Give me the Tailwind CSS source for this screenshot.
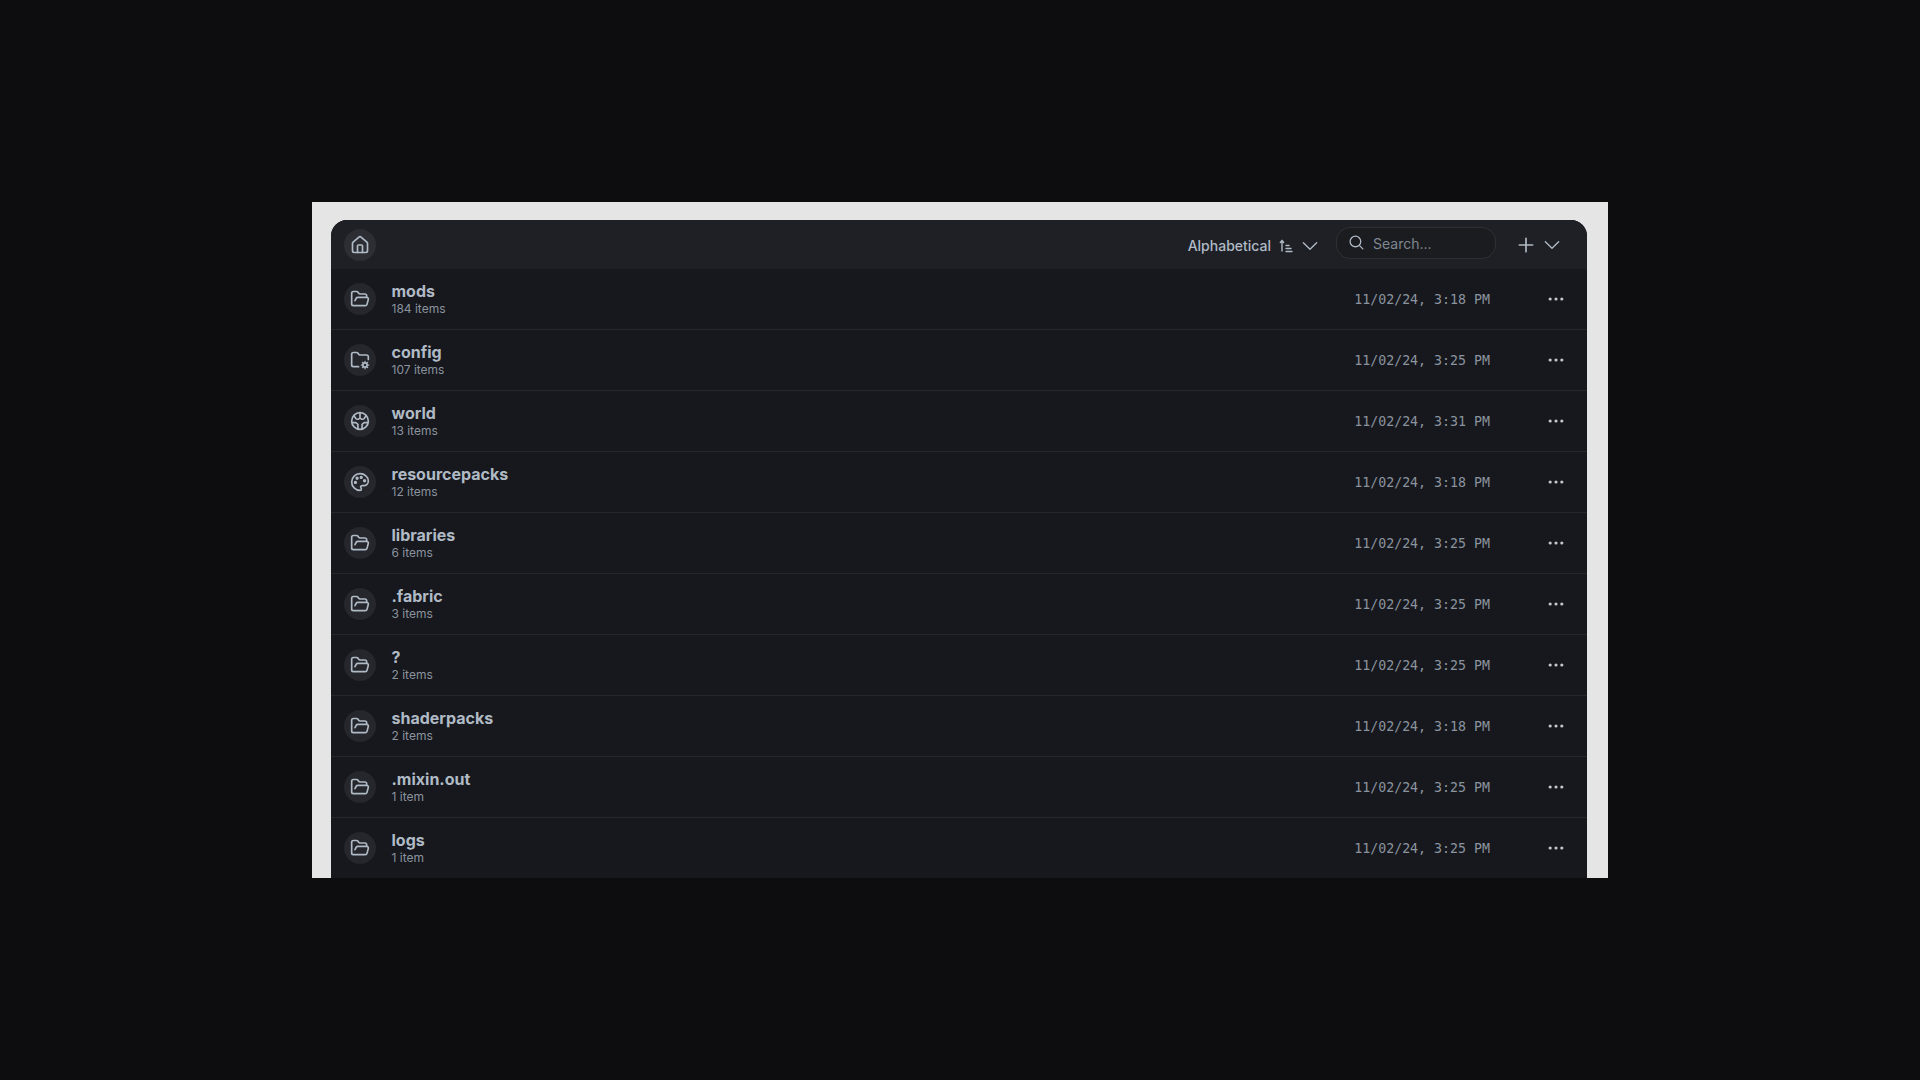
<!doctype html>
<html><head><meta charset="utf-8"><script src="https://cdn.jsdelivr.net/npm/@tailwindcss/browser@4"></script></head>
<body class="bg-[#0d0d0f] font-['Inter','Noto_Sans',sans-serif]">
<svg width="0" height="0" class="absolute"><defs>
<symbol id="open" viewBox="0 0 24 24" fill="none" stroke="currentColor" stroke-width="2" stroke-linecap="round" stroke-linejoin="round"><path d="m6 14 1.5-2.900A2 2 0 0 1 9.240 10H20a2 2 0 0 1 1.940 2.500l-1.540 6a2 2 0 0 1-1.950 1.500H4a2 2 0 0 1-2-2V5a2 2 0 0 1 2-2h3.900a2 2 0 0 1 1.690.9l.81 1.200a2 2 0 0 0 1.670.9H18a2 2 0 0 1 2 2v2"/></symbol>
<symbol id="dots" viewBox="0 0 24 24" fill="currentColor"><circle cx="5" cy="12" r="1.900"/><circle cx="12" cy="12" r="1.900"/><circle cx="19" cy="12" r="1.900"/></symbol>
<symbol id="chev" viewBox="0 0 24 24" fill="none" stroke="currentColor" stroke-width="1.600" stroke-linecap="round" stroke-linejoin="round"><path d="m4 8 8 8 8-8"/></symbol>
</defs></svg>
<div class="h-screen pt-[202px] px-[312px]">
<div class="h-[676px] bg-[#e5e5e5] pt-[18px] pl-[19px] pr-[21px] overflow-hidden">
<div class="h-[800px] rounded-t-[16px] bg-[#16181d] text-[#b0bac5]">

<div class="h-[49px] flex items-center pt-[1px] pl-[13px] pr-[25px] bg-[#1e2025] rounded-t-[16px]">
<span class="w-8 h-8 rounded-full bg-[#2c2e33] grid place-items-center"><svg class="w-5 h-5" viewBox="0 0 24 24" fill="none" stroke="currentColor" stroke-width="2" stroke-linecap="round" stroke-linejoin="round"><path d="M15 21v-8a1 1 0 0 0-1-1h-4a1 1 0 0 0-1 1v8"/><path d="M3 10a2 2 0 0 1 .709-1.528l7-5.999a2 2 0 0 1 2.582 0l7 5.999A2 2 0 0 1 21 10v9a2 2 0 0 1-2 2H5a2 2 0 0 1-2-2z"/></svg></span>
<span class="ml-auto text-[14px] font-medium leading-5 mt-[1px]">Alphabetical</span>
<svg class="w-4 h-4 ml-[7px] mt-[1px]" viewBox="0 0 16 16" fill="none" stroke="currentColor" stroke-width="1.400" stroke-linecap="round" stroke-linejoin="round"><path d="M4 13V2.500M2.300 4.500 4 2.500l1.700 2M8 7.500h3M8 10.500h5M8 13.500h6"/></svg>
<svg class="w-5 h-5 ml-[6px] mt-[1px]"><use href="#chev"/></svg>
<div class="ml-[16px] -mt-[4px] w-[160px] h-8 rounded-[14px] border border-[#2e3035] bg-[#1a1c20] flex items-center pl-[11px] gap-[8px]">
<svg class="w-[17px] h-[17px] shrink-0 -mt-[2px]" viewBox="0 0 24 24" fill="none" stroke="currentColor" stroke-width="1.800" stroke-linecap="round" stroke-linejoin="round"><path d="m21 21-4.300-4.300"/><circle cx="10.500" cy="10.500" r="7.500"/></svg>
<span class="text-[14px] text-[#7f8792]">Search...</span></div>
<svg class="w-5 h-5 ml-[20px]" viewBox="0 0 24 24" fill="none" stroke="currentColor" stroke-width="2" stroke-linecap="round"><path d="M4 12h16M12 4v16"/></svg>
<svg class="w-5 h-5 ml-[6px]"><use href="#chev"/></svg>
</div>

<div class="h-[61px] border-b border-[#25272b] flex items-center pl-[13px] pr-[21px]"><span class="w-8 h-8 rounded-full bg-[#25272c] grid place-items-center"><svg class="w-5 h-5"><use href="#open"/></svg></span><div class="ml-[15.5px] pt-[1px]"><div class="text-[16px] leading-[18px] font-bold">mods</div><div class="text-[12px] leading-[16px] mt-[1px] text-[#8b939e]">184 items</div></div><span class="ml-auto mt-[2px] font-['DejaVu_Sans_Mono',monospace] text-[13.28px] text-[#8b939e]">11/02/24, 3:18 PM</span><svg class="w-5 h-5 ml-[56px] text-[#c4c8ce]"><use href="#dots"/></svg></div>

<div class="h-[61px] border-b border-[#25272b] flex items-center pl-[13px] pr-[21px]"><span class="w-8 h-8 rounded-full bg-[#25272c] grid place-items-center"><svg class="w-5 h-5" viewBox="0 0 24 24" fill="none" stroke="currentColor" stroke-width="2" stroke-linecap="round" stroke-linejoin="round"><path d="M10.300 20H4a2 2 0 0 1-2-2V5a2 2 0 0 1 2-2h3.900a2 2 0 0 1 1.690.9l.81 1.200a2 2 0 0 0 1.670.9H20a2 2 0 0 1 2 2v3.300"/><circle cx="18" cy="18" r="2.500"/><path d="M18 13.500v1.500M18 21v1.500M22.500 18H21M15 18h-1.500M14.800 14.800l1 1M20.200 20.200l1 1M21.200 14.800l-1 1M15.800 20.200l-1 1" stroke-width="1.500"/></svg></span><div class="ml-[15.5px] pt-[1px]"><div class="text-[16px] leading-[18px] font-bold">config</div><div class="text-[12px] leading-[16px] mt-[1px] text-[#8b939e]">107 items</div></div><span class="ml-auto mt-[2px] font-['DejaVu_Sans_Mono',monospace] text-[13.28px] text-[#8b939e]">11/02/24, 3:25 PM</span><svg class="w-5 h-5 ml-[56px] text-[#c4c8ce]"><use href="#dots"/></svg></div>

<div class="h-[61px] border-b border-[#25272b] flex items-center pl-[13px] pr-[21px]"><span class="w-8 h-8 rounded-full bg-[#25272c] grid place-items-center"><svg class="w-5 h-5" viewBox="0 0 24 24" fill="none" stroke="currentColor" stroke-width="2" stroke-linecap="round" stroke-linejoin="round"><circle cx="12" cy="12" r="10"/><path d="M4.500 5.500 7 9c1 1 2.500 1 3.500.5L12 8.500M19.500 5.500 17 9c-1 1-2.500 1-3.500.5L12 8.500V3M2.500 14H7l2.500 2v5.500M21.500 14H17l-2.500 2v5.500"/></svg></span><div class="ml-[15.5px] pt-[1px]"><div class="text-[16px] leading-[18px] font-bold">world</div><div class="text-[12px] leading-[16px] mt-[1px] text-[#8b939e]">13 items</div></div><span class="ml-auto mt-[2px] font-['DejaVu_Sans_Mono',monospace] text-[13.28px] text-[#8b939e]">11/02/24, 3:31 PM</span><svg class="w-5 h-5 ml-[56px] text-[#c4c8ce]"><use href="#dots"/></svg></div>

<div class="h-[61px] border-b border-[#25272b] flex items-center pl-[13px] pr-[21px]"><span class="w-8 h-8 rounded-full bg-[#25272c] grid place-items-center"><svg class="w-5 h-5" viewBox="0 0 24 24" fill="none" stroke="currentColor" stroke-width="2" stroke-linecap="round" stroke-linejoin="round"><circle cx="13.500" cy="6.500" r="1" fill="currentColor"/><circle cx="17.500" cy="10.500" r="1" fill="currentColor"/><circle cx="8.500" cy="7.500" r="1" fill="currentColor"/><circle cx="6.500" cy="12.500" r="1" fill="currentColor"/><path d="M12 2C6.500 2 2 6.500 2 12s4.500 10 10 10c.926 0 1.648-.746 1.648-1.688 0-.437-.18-.835-.437-1.125-.29-.289-.438-.652-.438-1.125a1.640 1.640 0 0 1 1.668-1.668h1.996c3.051 0 5.555-2.503 5.555-5.554C21.965 6.012 17.461 2 12 2z"/></svg></span><div class="ml-[15.5px] pt-[1px]"><div class="text-[16px] leading-[18px] font-bold">resourcepacks</div><div class="text-[12px] leading-[16px] mt-[1px] text-[#8b939e]">12 items</div></div><span class="ml-auto mt-[2px] font-['DejaVu_Sans_Mono',monospace] text-[13.28px] text-[#8b939e]">11/02/24, 3:18 PM</span><svg class="w-5 h-5 ml-[56px] text-[#c4c8ce]"><use href="#dots"/></svg></div>

<div class="h-[61px] border-b border-[#25272b] flex items-center pl-[13px] pr-[21px]"><span class="w-8 h-8 rounded-full bg-[#25272c] grid place-items-center"><svg class="w-5 h-5"><use href="#open"/></svg></span><div class="ml-[15.5px] pt-[1px]"><div class="text-[16px] leading-[18px] font-bold">libraries</div><div class="text-[12px] leading-[16px] mt-[1px] text-[#8b939e]">6 items</div></div><span class="ml-auto mt-[2px] font-['DejaVu_Sans_Mono',monospace] text-[13.28px] text-[#8b939e]">11/02/24, 3:25 PM</span><svg class="w-5 h-5 ml-[56px] text-[#c4c8ce]"><use href="#dots"/></svg></div>

<div class="h-[61px] border-b border-[#25272b] flex items-center pl-[13px] pr-[21px]"><span class="w-8 h-8 rounded-full bg-[#25272c] grid place-items-center"><svg class="w-5 h-5"><use href="#open"/></svg></span><div class="ml-[15.5px] pt-[1px]"><div class="text-[16px] leading-[18px] font-bold">.fabric</div><div class="text-[12px] leading-[16px] mt-[1px] text-[#8b939e]">3 items</div></div><span class="ml-auto mt-[2px] font-['DejaVu_Sans_Mono',monospace] text-[13.28px] text-[#8b939e]">11/02/24, 3:25 PM</span><svg class="w-5 h-5 ml-[56px] text-[#c4c8ce]"><use href="#dots"/></svg></div>

<div class="h-[61px] border-b border-[#25272b] flex items-center pl-[13px] pr-[21px]"><span class="w-8 h-8 rounded-full bg-[#25272c] grid place-items-center"><svg class="w-5 h-5"><use href="#open"/></svg></span><div class="ml-[15.5px] pt-[1px]"><div class="text-[16px] leading-[18px] font-bold">?</div><div class="text-[12px] leading-[16px] mt-[1px] text-[#8b939e]">2 items</div></div><span class="ml-auto mt-[2px] font-['DejaVu_Sans_Mono',monospace] text-[13.28px] text-[#8b939e]">11/02/24, 3:25 PM</span><svg class="w-5 h-5 ml-[56px] text-[#c4c8ce]"><use href="#dots"/></svg></div>

<div class="h-[61px] border-b border-[#25272b] flex items-center pl-[13px] pr-[21px]"><span class="w-8 h-8 rounded-full bg-[#25272c] grid place-items-center"><svg class="w-5 h-5"><use href="#open"/></svg></span><div class="ml-[15.5px] pt-[1px]"><div class="text-[16px] leading-[18px] font-bold">shaderpacks</div><div class="text-[12px] leading-[16px] mt-[1px] text-[#8b939e]">2 items</div></div><span class="ml-auto mt-[2px] font-['DejaVu_Sans_Mono',monospace] text-[13.28px] text-[#8b939e]">11/02/24, 3:18 PM</span><svg class="w-5 h-5 ml-[56px] text-[#c4c8ce]"><use href="#dots"/></svg></div>

<div class="h-[61px] border-b border-[#25272b] flex items-center pl-[13px] pr-[21px]"><span class="w-8 h-8 rounded-full bg-[#25272c] grid place-items-center"><svg class="w-5 h-5"><use href="#open"/></svg></span><div class="ml-[15.5px] pt-[1px]"><div class="text-[16px] leading-[18px] font-bold">.mixin.out</div><div class="text-[12px] leading-[16px] mt-[1px] text-[#8b939e]">1 item</div></div><span class="ml-auto mt-[2px] font-['DejaVu_Sans_Mono',monospace] text-[13.28px] text-[#8b939e]">11/02/24, 3:25 PM</span><svg class="w-5 h-5 ml-[56px] text-[#c4c8ce]"><use href="#dots"/></svg></div>

<div class="h-[61px] border-b border-[#25272b] flex items-center pl-[13px] pr-[21px]"><span class="w-8 h-8 rounded-full bg-[#25272c] grid place-items-center"><svg class="w-5 h-5"><use href="#open"/></svg></span><div class="ml-[15.5px] pt-[1px]"><div class="text-[16px] leading-[18px] font-bold">logs</div><div class="text-[12px] leading-[16px] mt-[1px] text-[#8b939e]">1 item</div></div><span class="ml-auto mt-[2px] font-['DejaVu_Sans_Mono',monospace] text-[13.28px] text-[#8b939e]">11/02/24, 3:25 PM</span><svg class="w-5 h-5 ml-[56px] text-[#c4c8ce]"><use href="#dots"/></svg></div>

</div></div></div>
</body></html>
